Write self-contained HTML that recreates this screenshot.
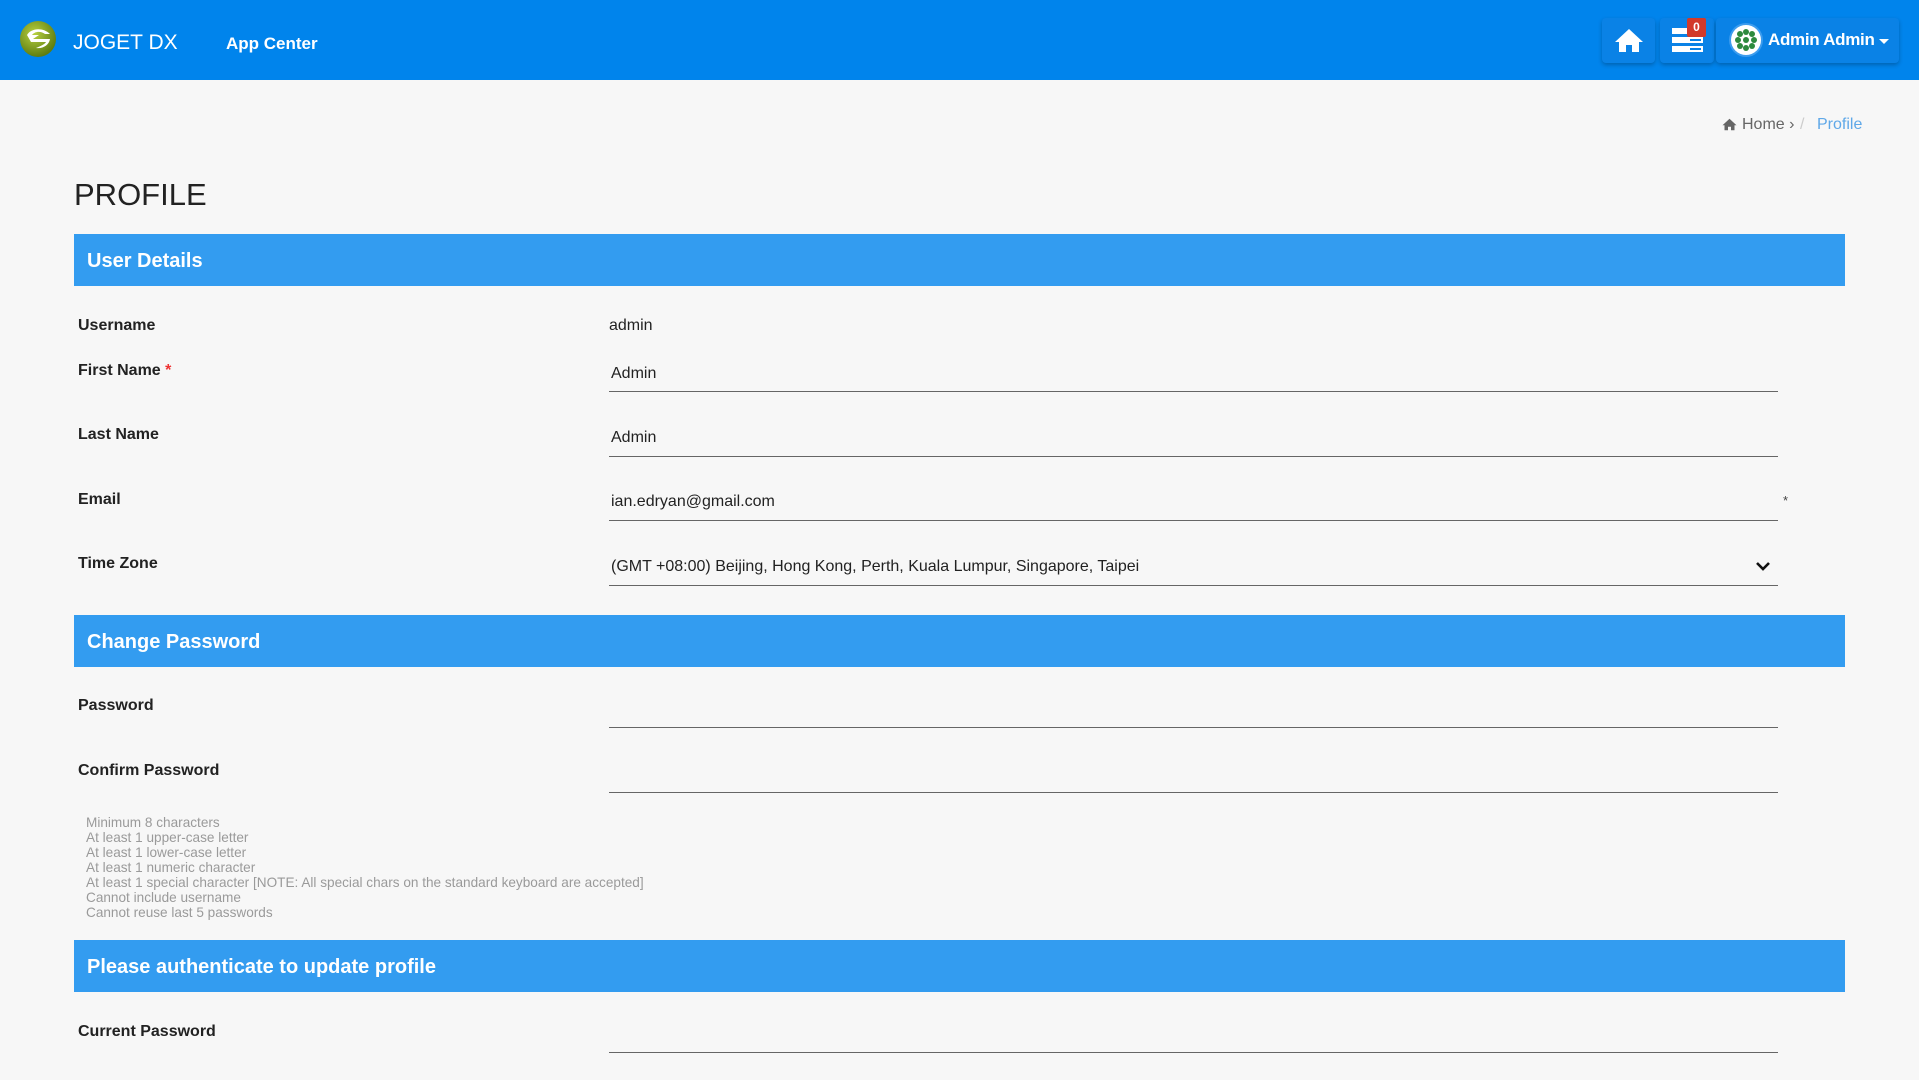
<!DOCTYPE html>
<html><head><meta charset="utf-8"><style>
*{margin:0;padding:0;box-sizing:border-box}
body{width:1919px;height:1080px;overflow:hidden;background:#f7f7f7;font-family:"Liberation Sans",Arial,sans-serif;position:relative;color:#222}
.hdr{position:absolute;left:0;top:0;width:1919px;height:80px;background:#0084ec}
.abs{position:absolute}
.btn{position:absolute;top:18px;height:45px;background:#0a82e6;border-radius:4px;box-shadow:0 2px 4px rgba(0,0,0,.25)}
.bar{position:absolute;left:74px;width:1771px;height:52px;background:#339cf0;color:#fff;font-weight:bold;font-size:20px;line-height:54px;padding-left:13px}
.lbl{position:absolute;left:78px;font-weight:bold;font-size:16px;color:#222}
.val{position:absolute;left:611px;font-size:16px;color:#222}
.ul{position:absolute;left:609px;width:1169px;height:1px;background:#666}
.hint{position:absolute;left:86px;top:815px;font-size:13.6px;line-height:15px;color:#9a9a9a}
</style></head><body>
<div class="hdr"></div>
<svg class="abs" style="left:19px;top:20px" width="38" height="38" viewBox="0 0 38 38">
<defs><radialGradient id="g" cx="40%" cy="35%" r="65%"><stop offset="0" stop-color="#b8d040"/><stop offset="1" stop-color="#5e7d10"/></radialGradient></defs>
<circle cx="19" cy="19" r="18" fill="url(#g)"/>
<path d="M8 15 C12 8 24 7 31 14 L26 14 C22 11 16 11 13 15 L20 15 L14 19 L31 19 C30 25 24 29 17 28 C22 26 26 24 27 22 L12 22 Z" fill="#fff"/>
</svg>
<div class="abs" style="left:73px;top:31px;font-size:21px;color:#fff">JOGET DX</div>
<div class="abs" style="left:226px;top:34px;font-size:17px;color:#fff;font-weight:bold">App Center</div>
<div class="btn" style="left:1602px;width:53px"></div>
<div class="btn" style="left:1660px;width:54px"></div>
<div class="btn" style="left:1716px;width:183px"></div>
<svg class="abs" style="left:1614px;top:28px" width="30" height="25" viewBox="0 0 30 25"><path d="M15 1 L1 14 L5 14 L5 24 L12 24 L12 17 L18 17 L18 24 L25 24 L25 14 L29 14 Z" fill="#fff"/></svg>
<svg class="abs" style="left:1672px;top:28px" width="32" height="24" viewBox="0 0 32 24"><rect x="0" y="0" width="31" height="6" fill="#fff"/><rect x="0" y="9" width="31" height="6" fill="#fff"/><rect x="0" y="18" width="31" height="6" fill="#fff"/><rect x="18" y="11" width="11" height="2" fill="#0a82e6"/><rect x="18" y="20" width="11" height="2" fill="#0a82e6"/></svg>
<div class="abs" style="left:1687px;top:18px;width:19px;height:19px;background:#d23a2a;color:#fff;font-size:12px;font-weight:bold;text-align:center;line-height:19px;border-radius:2px">0</div>
<svg class="abs" style="left:1728px;top:22px" width="36" height="36" viewBox="0 0 36 36"><circle cx="18" cy="18" r="17" fill="#3c9cee"/><circle cx="18" cy="18" r="15" fill="#fff"/><g fill="#2d8a3e"><circle cx="12" cy="12" r="3"/><circle cx="18" cy="10" r="3"/><circle cx="24" cy="12" r="3"/><circle cx="10" cy="18" r="3"/><circle cx="18" cy="18" r="3"/><circle cx="26" cy="18" r="3"/><circle cx="12" cy="24" r="3"/><circle cx="18" cy="26" r="3"/><circle cx="24" cy="24" r="3"/></g></svg>
<div class="abs" style="left:1768px;top:30px;font-size:17px;color:#fff;font-weight:bold;letter-spacing:-0.3px">Admin Admin</div>
<div class="abs" style="left:1879px;top:39px;width:0;height:0;border-left:5px solid transparent;border-right:5px solid transparent;border-top:5px solid #fff"></div>

<svg class="abs" style="left:1722px;top:118px" width="15" height="13" viewBox="0 0 30 25"><path d="M15 1 L1 14 L5 14 L5 24 L12 24 L12 17 L18 17 L18 24 L25 24 L25 14 L29 14 Z" fill="#666"/></svg>
<div class="abs" style="left:1742px;top:116px;font-size:16px;color:#666">Home ›</div>
<div class="abs" style="left:1800px;top:116px;font-size:16px;color:#ccc">/</div>
<div class="abs" style="left:1817px;top:116px;font-size:16px;color:#5fa8e8">Profile</div>

<div class="abs" style="left:74px;top:177px;font-size:31px;color:#222">PROFILE</div>

<div class="bar" style="top:234px">User Details</div>
<div class="lbl" style="top:317px">Username</div><div class="val" style="left:609px;top:317px">admin</div>
<div class="lbl" style="top:362px">First Name <span style="color:#e33">*</span></div><div class="val" style="top:365px">Admin</div><div class="ul" style="top:391px"></div>
<div class="lbl" style="top:426px">Last Name</div><div class="val" style="top:429px">Admin</div><div class="ul" style="top:456px"></div>
<div class="lbl" style="top:491px">Email</div><div class="val" style="top:493px">ian.edryan@gmail.com</div><div class="ul" style="top:520px"></div>
<div class="abs" style="left:1783px;top:493px;font-size:13px;color:#444">*</div>
<div class="lbl" style="top:555px">Time Zone</div><div class="val" style="top:558px">(GMT +08:00) Beijing, Hong Kong, Perth, Kuala Lumpur, Singapore, Taipei</div><div class="ul" style="top:585px"></div>
<svg class="abs" style="left:1755px;top:561px" width="16" height="11" viewBox="0 0 16 11"><path d="M2 2 L8 8 L14 2" stroke="#111" stroke-width="2.6" fill="none"/></svg>

<div class="bar" style="top:615px">Change Password</div>
<div class="lbl" style="top:697px">Password</div><div class="ul" style="top:727px"></div>
<div class="lbl" style="top:762px">Confirm Password</div><div class="ul" style="top:792px"></div>
<div class="hint">Minimum 8 characters<br>At least 1 upper-case letter<br>At least 1 lower-case letter<br>At least 1 numeric character<br>At least 1 special character [NOTE: All special chars on the standard keyboard are accepted]<br>Cannot include username<br>Cannot reuse last 5 passwords</div>

<div class="bar" style="top:940px">Please authenticate to update profile</div>
<div class="lbl" style="top:1023px">Current Password</div><div class="ul" style="top:1052px"></div>
</body></html>
